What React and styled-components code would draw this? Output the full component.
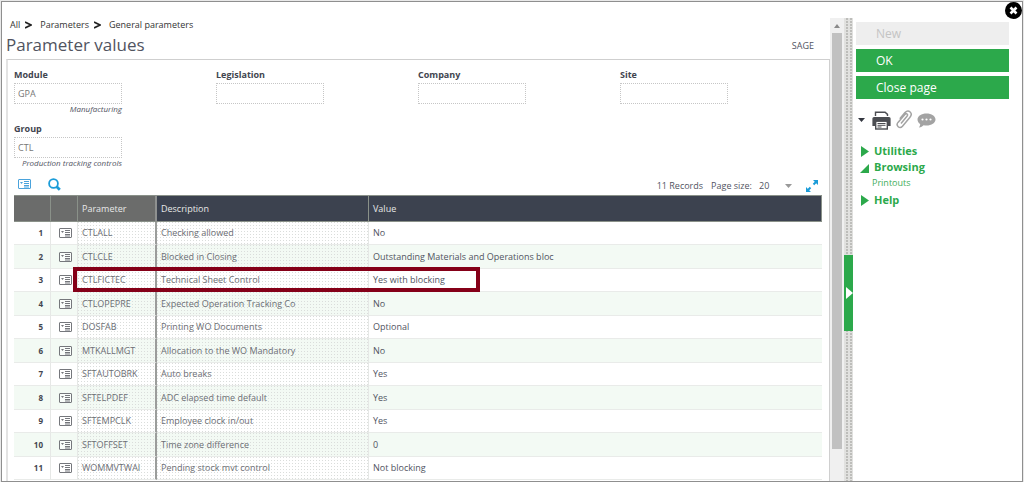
import React from 'react';
import styled, { createGlobalStyle, css } from 'styled-components';

const GlobalStyle = createGlobalStyle`
  * {
    box-sizing: border-box;
  }
  body {
    margin: 0;
    background: #e9e9e9;
    font-family: 'Open Sans', 'Noto Sans', sans-serif;
    font-size: 9px;
    line-height: 14px;
    color: #51545f;
  }
  button, input, select {
    font-family: inherit;
  }
`;

const Screen = styled.div`
  height: 100vh;
  padding: 1px 1px 0;
`;

const Frame = styled.div`
  position: relative;
  display: flex;
  height: 100%;
  padding-top: 16px;
  border: 1px solid #8f8f8f;
  background: #fff;
  overflow: hidden;
`;

const CloseButton = styled.button`
  position: absolute;
  top: 0;
  right: 0;
  width: 17px;
  height: 17px;
  padding: 0;
  border: none;
  background: none;
  cursor: pointer;
  svg {
    display: block;
  }
`;

const Main = styled.main`
  display: flex;
  flex: 1;
  flex-direction: column;
  min-width: 0;
  padding-left: 4px;
`;

const Breadcrumb = styled.nav`
  display: flex;
  align-items: center;
  padding-left: 4px;
  a {
    color: #333;
    text-decoration: none;
  }
`;

const Chevron = styled.svg`
  margin: 0 8px 0 5px;
`;

const TitleBar = styled.header`
  display: flex;
  align-items: center;
  justify-content: space-between;
  height: 27px;
  padding-right: 16px;
`;

const Title = styled.h1`
  margin: 0;
  padding-bottom: 2px;
  font-size: 17px;
  font-weight: 400;
  line-height: 24px;
  color: #51545f;
`;

const Panel = styled.section`
  flex: 1;
  padding: 8px 7px 0 6px;
  border: 1px solid #cfcfcf;
  border-left: 2px solid #e3e3e3;
  border-bottom: none;
`;

const Fields = styled.div`
  display: grid;
  grid-template-columns: repeat(4, 1fr);
`;

const Field = styled.div`
  height: 54px;
`;

const Label = styled.label`
  display: block;
  height: 15px;
  font-weight: 700;
  color: #42454f;
`;

const TextInput = styled.input`
  display: block;
  width: 108px;
  height: 21px;
  padding: 0 3px;
  border: 1px dotted #c6c6c6;
  background: #fff;
  font-size: 9px;
  color: #777;
`;

const Hint = styled.div`
  width: 108px;
  font-size: 8px;
  line-height: 10px;
  font-style: italic;
  text-align: right;
  white-space: nowrap;
`;

const Toolbar = styled.div`
  display: flex;
  align-items: center;
  gap: 8px;
  height: 19px;
  padding: 0 4px;
`;

const IconButton = styled.button`
  display: flex;
  padding: 0;
  border: none;
  background: none;
  cursor: pointer;
`;

const ToolGroup = styled.div`
  display: flex;
  flex: 1;
  gap: 17px;
  align-items: center;
  padding-bottom: 3px;
`;

const PageSize = styled.label`
  display: flex;
  align-items: center;
  gap: 7px;
`;

const SelectBox = styled.span`
  display: flex;
  align-items: center;
  margin-right: 6px;
`;

const Select = styled.select`
  width: 32px;
  margin-right: -6px;
  padding: 0;
  border: none;
  background: none;
  appearance: none;
  font-size: 9px;
  color: #51545f;
`;

const Grid = styled.table`
  width: 100%;
  table-layout: fixed;
  border-collapse: separate;
  border-spacing: 0;
`;

const HeadCell = styled.th`
  height: 27px;
  padding: 0 4px;
  border: solid #8a9189;
  border-width: 1px 1px 1px 0;
  background: ${(props) => (props.$fixed ? '#6b6c6b' : '#3c424f')};
  font-weight: 400;
  text-align: left;
  color: #e8e8e8;
  ${(props) =>
    props.$split &&
    css`
      border-right: 2px solid #8f9190;
    `}
`;

const dots = css`
  background-image: conic-gradient(at 1px 1px, transparent 270deg, #dadddb 270deg);
  background-size: 3px 3px;
`;

const Cell = styled.td`
  position: relative;
  padding: 0 4px;
  border-right: 1px solid #e6e8e6;
  border-bottom: 1px solid #e9ebe9;
  white-space: nowrap;
  color: ${(props) => (props.$dotted ? '#6c6e74' : '#51545f')};
  ${(props) => props.$dotted && dots}
  ${(props) =>
    props.$split &&
    css`
      border-right: 2px solid #9b9d9b;
    `}
  &:last-child {
    border-right: none;
  }
`;

const Row = styled.tr`
  height: 23px;
  background: #fff;
  &:nth-child(even) {
    height: 24px;
    background: #f3faf4;
  }
`;

const NumberCell = styled(Cell)`
  padding-right: 7px;
  font-size: 8px;
  font-weight: 700;
  text-align: right;
  color: #42454f;
`;

const IconCell = styled(Cell)`
  padding: 0 0 0 2px;
  text-align: center;
  svg {
    display: block;
    margin: 0 auto;
  }
`;

const Highlight = styled.span`
  position: absolute;
  top: -2px;
  left: -5px;
  z-index: 1;
  width: 407px;
  height: 25px;
  border: 4px solid #850018;
  pointer-events: none;
`;

const ScrollTrack = styled.div`
  display: flex;
  flex: none;
  flex-direction: column;
  width: 14px;
  padding: 0 2px 32px;
  background: #f0f0f0;
`;

const ScrollArrow = styled.svg`
  flex: none;
`;

const ScrollThumb = styled.div`
  flex: 1;
  background: #c1c1c1;
`;

const Splitter = styled.div`
  display: flex;
  flex: none;
  align-items: center;
  width: 9px;
  padding-top: 86px;
  background-color: #e1e1df;
  background-image: conic-gradient(at 2px 2px, transparent 270deg, #bdbdba 270deg);
  background-position: 2px 0;
  background-size: 4px 3px;
`;

const SplitterHandle = styled.button`
  width: 9px;
  height: 76px;
  padding: 0;
  border: none;
  background: #2ca94b;
  cursor: pointer;
  svg {
    display: block;
  }
`;

const Side = styled.aside`
  flex: none;
  width: 169px;
  padding: 4px 13px 0 3px;
`;

const ActionButton = styled.button`
  display: block;
  width: 100%;
  height: 23px;
  margin-bottom: 4px;
  padding: 0 20px;
  border: none;
  background: #2ca94b;
  font-size: 12px;
  line-height: 22px;
  text-align: left;
  color: #fff;
  cursor: pointer;
  &:disabled {
    background: #eee;
    color: #c4c4c4;
    cursor: default;
  }
`;

const SideTools = styled.div`
  display: flex;
  align-items: center;
  gap: 4px;
  height: 34px;
  margin-bottom: 6px;
  padding-left: 2px;
`;

const OptionsButton = styled(IconButton)`
  padding-right: 3px;
`;

const Menu = styled.ul`
  margin: 0;
  padding: 0 0 0 4px;
  list-style: none;
`;

const MenuItem = styled.li`
  a {
    display: flex;
    align-items: center;
    gap: 5px;
    height: 16px;
    font-size: 11px;
    font-weight: 700;
    color: #2ca94b;
    text-decoration: none;
  }
`;

const SubItem = styled.li`
  a {
    display: block;
    height: 17px;
    padding-left: 12px;
    font-size: 9px;
    line-height: 16px;
    color: #3fae5b;
    text-decoration: none;
  }
`;

const ROWS = [
  ['CTLALL', 'Checking allowed', 'No'],
  ['CTLCLE', 'Blocked in Closing', 'Outstanding Materials and Operations bloc'],
  ['CTLFICTEC', 'Technical Sheet Control', 'Yes with blocking'],
  ['CTLOPEPRE', 'Expected Operation Tracking Co', 'No'],
  ['DOSFAB', 'Printing WO Documents', 'Optional'],
  ['MTKALLMGT', 'Allocation to the WO Mandatory', 'No'],
  ['SFTAUTOBRK', 'Auto breaks', 'Yes'],
  ['SFTELPDEF', 'ADC elapsed time default', 'Yes'],
  ['SFTEMPCLK', 'Employee clock in/out', 'Yes'],
  ['SFTOFFSET', 'Time zone difference', '0'],
  ['WOMMVTWAI', 'Pending stock mvt control', 'Not blocking'],
];

const FIELDS = [
  { id: 'module', label: 'Module', value: 'GPA', hint: 'Manufacturing' },
  { id: 'legislation', label: 'Legislation', value: '' },
  { id: 'company', label: 'Company', value: '' },
  { id: 'site', label: 'Site', value: '' },
  { id: 'group', label: 'Group', value: 'CTL', hint: 'Production tracking controls' },
];

const CardIcon = ({ color = '#75777c' }) => (
  <svg width="13" height="10" viewBox="0 0 13 10">
    <rect x="0.5" y="0.5" width="12" height="9" rx="0.5" fill="#fff" fillOpacity="0.5" stroke={color} />
    <path d="M2 3h3l-1.500 2z" fill={color} />
    <path d="M6 2.500h5M6 4.500h5M6 6.500h5M6 8h5" stroke={color} strokeWidth="1" />
  </svg>
);

const SearchIcon = () => (
  <svg width="13" height="13" viewBox="0 0 13 13" fill="none" stroke="#1b9cd8">
    <circle cx="5.500" cy="5.500" r="4.400" strokeWidth="1.800" />
    <path d="M8.500 8.500l3.300 3.300" strokeWidth="2.800" />
  </svg>
);

const ExpandIcon = () => (
  <svg width="12" height="12" viewBox="0 0 12 12" fill="#1b9cd8" stroke="#1b9cd8">
    <path d="M7 0h5v5z M0 7v5h5z" stroke="none" />
    <path d="M7.500 4.500l2.500-2.500M4.500 7.500l-2.500 2.500" strokeWidth="2" />
  </svg>
);

const PrinterIcon = () => (
  <svg width="19" height="19" viewBox="0 0 19 19">
    <path d="M3.500 5V1.200h9.600L15.500 3.400V5" fill="#fff" stroke="#4b4d52" strokeWidth="1.400" />
    <path d="M2 6h15a1.600 1.600 0 0 1 1.600 1.600V15H.4V7.600A1.600 1.600 0 0 1 2 6z" fill="#4b4d52" />
    <path d="M3.500 5.500h12" stroke="#fff" strokeWidth="0.800" />
    <rect x="3.700" y="10.200" width="11.600" height="7.800" fill="#fff" stroke="#4b4d52" strokeWidth="1.400" />
    <path d="M5.500 12.500h8M5.500 14.300h8M5.500 16h4" stroke="#4b4d52" strokeWidth="1" />
  </svg>
);

const ClipIcon = () => (
  <svg width="18" height="20" viewBox="0 0 18 20" fill="none" stroke="#a3a3a3" strokeWidth="1.500">
    <path d="M6 13.500l6-7.200c1.500-1.800-.600-3.600-2.100-1.900L3 12.400c-2.600 3.200 1.600 7 4.500 3.800l7.300-8.700C18.600 3 13.500-1.200 10 2.600L4.800 8.800" />
  </svg>
);

const CommentIcon = () => (
  <svg width="19" height="15" viewBox="0 0 19 15">
    <path d="M9.500.5c5 0 9 2.600 9 6s-4 6-9 6c-1 0-2-.1-2.900-.3C5.500 13.400 4 14.200 2 14.400c.8-.9 1.200-2 1.200-3.300C1.500 10 .5 8.400.5 6.500c0-3.400 4-6 9-6z" fill="#a3a3a3" />
    <circle cx="5.500" cy="6.500" r="1.100" fill="#fff" />
    <circle cx="9.500" cy="6.500" r="1.100" fill="#fff" />
    <circle cx="13.500" cy="6.500" r="1.100" fill="#fff" />
  </svg>
);

const Caret = ({ color }) => (
  <svg width="7" height="4" viewBox="0 0 7 4">
    <path d="M0 0h7L3.500 4z" fill={color} />
  </svg>
);

const Arrow = ({ open }) => (
  <svg width="9" height="11" viewBox="0 0 9 11">
    <path d={open ? 'M0 11h9V2z' : 'M1 0v11l8-5.500z'} fill="#2ca94b" />
  </svg>
);

const Separator = () => (
  <Chevron width="7" height="8" viewBox="0 0 7 8" fill="none" stroke="#222" strokeWidth="1.600">
    <path d="M0 1l6 3-6 3" />
  </Chevron>
);

export default function App() {
  return (
    <>
      <GlobalStyle />
      <Screen>
        <Frame>
          <Main>
            <Breadcrumb>
              <a href="#all">All</a>
              <Separator />
              <a href="#parameters">Parameters</a>
              <Separator />
              <a href="#general">General parameters</a>
            </Breadcrumb>
            <TitleBar>
              <Title>Parameter values</Title>
              <span>SAGE</span>
            </TitleBar>
            <Panel>
              <Fields>
                {FIELDS.map((field) => (
                  <Field key={field.id}>
                    <Label htmlFor={field.id}>{field.label}</Label>
                    <TextInput id={field.id} defaultValue={field.value} readOnly />
                    {field.hint && <Hint>{field.hint}</Hint>}
                  </Field>
                ))}
              </Fields>
              <Toolbar>
                <ToolGroup>
                  <IconButton aria-label="Card view">
                    <CardIcon color="#4aa3dc" />
                  </IconButton>
                  <IconButton aria-label="Search">
                    <SearchIcon />
                  </IconButton>
                </ToolGroup>
                <span>11 Records</span>
                <PageSize>
                  Page size:
                  <SelectBox>
                    <Select defaultValue="20">
                      <option>20</option>
                      <option>50</option>
                    </Select>
                    <Caret color="#999" />
                  </SelectBox>
                </PageSize>
                <IconButton aria-label="Full screen">
                  <ExpandIcon />
                </IconButton>
              </Toolbar>
              <Grid>
                <colgroup>
                  <col width="37" />
                  <col width="27" />
                  <col width="79" />
                  <col width="212" />
                  <col />
                </colgroup>
                <thead>
                  <tr>
                    <HeadCell $fixed />
                    <HeadCell $fixed />
                    <HeadCell $fixed $split>Parameter</HeadCell>
                    <HeadCell>Description</HeadCell>
                    <HeadCell>Value</HeadCell>
                  </tr>
                </thead>
                <tbody>
                  {ROWS.map(([code, description, value], index) => (
                    <Row key={code}>
                      <NumberCell>{index + 1}</NumberCell>
                      <IconCell>
                        <CardIcon />
                      </IconCell>
                      <Cell $dotted $split>
                        {code}
                        {code === 'CTLFICTEC' && <Highlight />}
                      </Cell>
                      <Cell $dotted>{description}</Cell>
                      <Cell>{value}</Cell>
                    </Row>
                  ))}
                </tbody>
              </Grid>
            </Panel>
          </Main>
          <ScrollTrack>
            <ScrollArrow width="10" height="15" viewBox="0 0 10 15">
              <path d="M2 10h6L5 6z" fill="#8a8a8a" />
            </ScrollArrow>
            <ScrollThumb />
          </ScrollTrack>
          <Splitter>
            <SplitterHandle aria-label="Collapse side panel">
              <svg width="9" height="76" viewBox="0 0 9 76">
                <path d="M2 32v12l7-6z" fill="#fff" />
              </svg>
            </SplitterHandle>
          </Splitter>
          <Side>
            <ActionButton disabled>New</ActionButton>
            <ActionButton>OK</ActionButton>
            <ActionButton>Close page</ActionButton>
            <SideTools>
              <OptionsButton aria-label="Print options">
                <Caret color="#33363f" />
              </OptionsButton>
              <IconButton aria-label="Print">
                <PrinterIcon />
              </IconButton>
              <IconButton aria-label="Attachments">
                <ClipIcon />
              </IconButton>
              <IconButton aria-label="Comments">
                <CommentIcon />
              </IconButton>
            </SideTools>
            <Menu>
              <MenuItem>
                <a href="#utilities">
                  <Arrow />
                  Utilities
                </a>
              </MenuItem>
              <MenuItem>
                <a href="#browsing">
                  <Arrow open />
                  Browsing
                </a>
              </MenuItem>
              <SubItem>
                <a href="#printouts">Printouts</a>
              </SubItem>
              <MenuItem>
                <a href="#help">
                  <Arrow />
                  Help
                </a>
              </MenuItem>
            </Menu>
          </Side>
          <CloseButton aria-label="Close">
            <svg width="17" height="17" viewBox="0 0 17 17">
              <circle cx="8.500" cy="8.500" r="8.500" fill="#000" />
              <path d="M5.500 5.500l6 6M11.500 5.500l-6 6" stroke="#fff" strokeWidth="2.600" />
            </svg>
          </CloseButton>
        </Frame>
      </Screen>
    </>
  );
}
